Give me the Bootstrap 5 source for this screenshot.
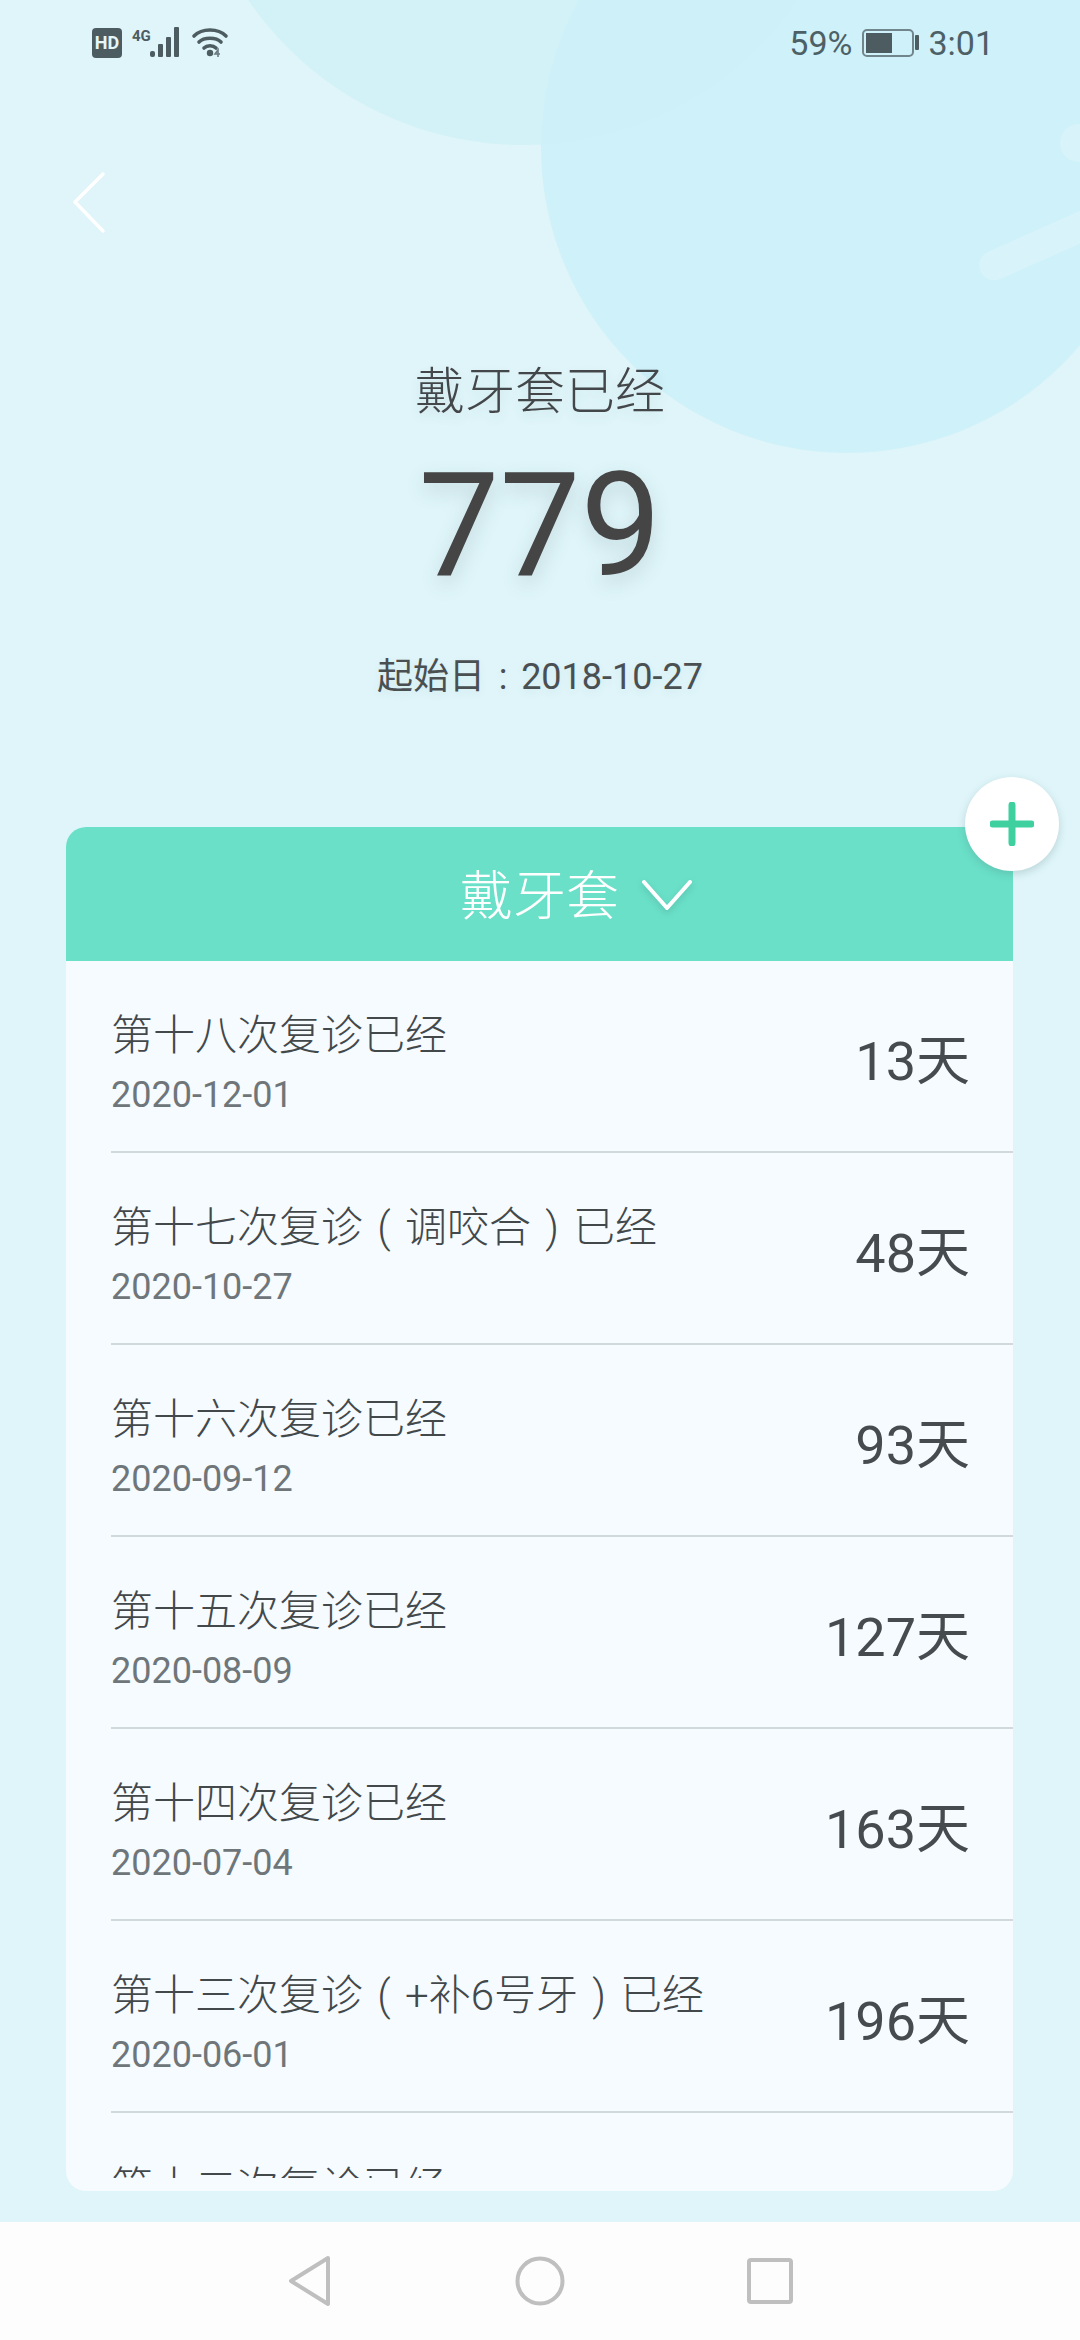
<!DOCTYPE html>
<html lang="zh-CN">
<head>
    <meta charset="UTF-8">
    <meta name="viewport" content="width=device-width, initial-scale=1.0">
    <title>戴牙套</title>
    <link href="https://cdn.jsdelivr.net/npm/bootstrap@5.3.3/dist/css/bootstrap.min.css" rel="stylesheet">
    <style>
        html, body { margin: 0; background: #dff5f9; }
        body { font-family: Roboto, "Noto Sans CJK SC", sans-serif; color: #454a4c; }
        .phone { position: relative; width: 1080px; height: 2340px; overflow: hidden; background: #dff5f9; }

        /* background decoration */
        .blob { position: absolute; border-radius: 50%; background: #cbf0f6; opacity: .6; }
        .blob-a { left: 190px; top: -521px; width: 666px; height: 666px; }
        .blob-b { left: 541px; top: -159px; width: 612px; height: 612px; background: #cdf1f8; opacity: .9; }
        .pill { position: absolute; background: #fff; opacity: .2; border-radius: 20px; }
        .pill-a { left: 975px; top: 230px; width: 130px; height: 30px; transform: rotate(-24deg); }
        .pill-b { left: 1060px; top: 124px; width: 50px; height: 38px; }

        .page-body { position: relative; height: 2222px; }

        /* status bar */
        .status-bar { height: 84px; padding: 27px 86px 0 92px; font-size: 34px; line-height: 32px; color: #4d6066; }
        .status-bar svg { display: block; }

        .back-row { height: 166px; padding: 0 0 0 72px; }
        .back-row svg { margin-top: 87px; }

        /* hero */
        .hero-title { margin-top: 112px; font-size: 50px; line-height: 60px; color: #43474a; font-weight: 300; text-shadow: 0 5px 12px rgba(60, 90, 100, .12); }
        .hero-count { margin-top: 29px; font-size: 144px; line-height: 150px; color: #454545; text-shadow: 0 8px 20px rgba(60, 90, 100, .18); }
        .hero-date { margin-top: 54px; font-size: 36px; line-height: 44px; color: #4a4f52; text-shadow: 0 3px 8px rgba(60, 90, 100, .08); }

        /* card */
        .day-card { position: absolute; left: 66px; top: 827px; width: 947px; height: 1364px; border: 0; border-radius: 20px; background: #f5fbfe; overflow: hidden; }
        .day-head { height: 134px; background: #6ae0c8; color: #fff; font-size: 53px; font-weight: 300; border: 0; border-radius: 0; padding: 2px 0 0 74px; }
        .day-head span { margin-top: 6px; }
        .day-head svg { margin-left: 22px; filter: drop-shadow(0 3px 3px rgba(60, 120, 110, .3)); }
        .day-list { height: 1217px; overflow: hidden; }
        .day-item { height: 192px; margin-left: 45px; padding: 0 43px 0 0; background: transparent; border: 0; border-bottom: 2px solid #d2d9dd; border-radius: 0; }
        .item-name { font-size: 42px; line-height: 50px; color: #43484b; font-weight: 300; margin-top: 14px; }
        .item-date { font-size: 36px; line-height: 40px; min-height: 40px; color: #6f767a; margin-top: 14px; }
        .item-days { font-size: 54px; line-height: 60px; color: #454b4f; margin-top: 12px; }
        .paren { display: inline-block; width: 1em; text-align: center; }

        .add-btn { position: absolute; left: 965px; top: 777px; width: 94px; height: 94px; border-radius: 50%; background: #fff; box-shadow: 0 3px 8px rgba(60, 100, 100, .22); padding: 0; border: 0; }

        /* system nav */
        .sys-nav { height: 118px; background: #fdfdfd; position: relative; }
        .sys-nav svg { display: block; }
        .nav-icons { gap: 182px; }
    </style>
</head>
<body>
<div class="phone">
    <div class="page-body">
        <div class="blob blob-a"></div>
        <div class="blob blob-b"></div>
        <div class="pill pill-a"></div>
        <div class="pill pill-b"></div>

        <!-- status bar -->
        <div class="status-bar d-flex justify-content-between position-relative">
            <svg width="140" height="32" viewBox="0 0 140 32">
                <rect x="0" y="1" width="30" height="30" rx="4" fill="#4d5c60"/>
                <text x="15" y="22" text-anchor="middle" font-family="Roboto" font-weight="700" font-size="18" fill="#e6f6f9">HD</text>
                <text x="40" y="14" font-family="Roboto" font-weight="700" font-size="15" fill="#4d5c60">4G</text>
                <g fill="#4d5c60">
                    <rect x="58" y="24" width="5" height="6" rx="2"/>
                    <rect x="66" y="17" width="5" height="13" rx="1"/>
                    <rect x="74" y="10" width="5" height="20" rx="1"/>
                    <rect x="82" y="0" width="5" height="30" rx="1"/>
                </g>
                <g fill="none" stroke="#4d5c60" stroke-width="3.6" stroke-linecap="round">
                    <path d="M102 9 C110 1 126 1 134 9"/>
                    <path d="M107 15 C112 10 124 10 129 15"/>
                    <path d="M112 21 C115 18 121 18 124 21"/>
                </g>
                <circle cx="118" cy="26" r="3.2" fill="#4d5c60"/>
                <path d="M126 30 v-7 l-3 4 h5" fill="none" stroke="#6b7b80" stroke-width="1.6"/>
            </svg>
            <div class="d-flex align-items-start">
                <span>59%</span>
                <svg class="ms-2 me-2" width="60" height="30" viewBox="0 0 60 30">
                    <rect x="3" y="3" width="50" height="26" rx="4" fill="none" stroke="#71868c" stroke-width="2"/>
                    <rect x="6" y="6" width="26" height="20" fill="#4d5c60"/>
                    <rect x="55" y="8" width="4" height="15" rx="1" fill="#4d5c60"/>
                </svg>
                <span>3:01</span>
            </div>
        </div>

        <!-- back -->
        <div class="back-row position-relative">
            <svg width="36" height="64" viewBox="0 0 36 64">
                <path d="M31 3 L3 31 L31 60" fill="none" stroke="#fff" stroke-width="3.5" stroke-linecap="round" stroke-linejoin="round"/>
            </svg>
        </div>

        <!-- hero -->
        <div class="text-center position-relative">
            <div class="hero-title">戴牙套已经</div>
            <div class="hero-count">779</div>
            <div class="hero-date">起始日<span class="paren">:</span>2018-10-27</div>
        </div>

        <!-- list card -->
        <div class="card day-card">
            <div class="card-header day-head d-flex align-items-center justify-content-center">
                <span>戴牙套</span>
                <svg width="52" height="32" viewBox="0 0 52 32"><path d="M3 3 L26 29 L49 3" fill="none" stroke="#fff" stroke-width="4" stroke-linecap="round" stroke-linejoin="round"/></svg>
            </div>
            <div class="list-group day-list">
                <div class="list-group-item day-item flex-shrink-0 d-flex justify-content-between align-items-center">
                    <div><div class="item-name">第十八次复诊已经</div><div class="item-date">2020-12-01</div></div>
                    <div class="item-days">13天</div>
                </div>
                <div class="list-group-item day-item flex-shrink-0 d-flex justify-content-between align-items-center">
                    <div><div class="item-name">第十七次复诊<span class="paren">(</span>调咬合<span class="paren">)</span>已经</div><div class="item-date">2020-10-27</div></div>
                    <div class="item-days">48天</div>
                </div>
                <div class="list-group-item day-item flex-shrink-0 d-flex justify-content-between align-items-center">
                    <div><div class="item-name">第十六次复诊已经</div><div class="item-date">2020-09-12</div></div>
                    <div class="item-days">93天</div>
                </div>
                <div class="list-group-item day-item flex-shrink-0 d-flex justify-content-between align-items-center">
                    <div><div class="item-name">第十五次复诊已经</div><div class="item-date">2020-08-09</div></div>
                    <div class="item-days">127天</div>
                </div>
                <div class="list-group-item day-item flex-shrink-0 d-flex justify-content-between align-items-center">
                    <div><div class="item-name">第十四次复诊已经</div><div class="item-date">2020-07-04</div></div>
                    <div class="item-days">163天</div>
                </div>
                <div class="list-group-item day-item flex-shrink-0 d-flex justify-content-between align-items-center">
                    <div><div class="item-name">第十三次复诊<span class="paren">(</span>+补6号牙<span class="paren">)</span>已经</div><div class="item-date">2020-06-01</div></div>
                    <div class="item-days">196天</div>
                </div>
                <!-- cut off by the scroll area in the screenshot, only the top of the name shows -->
                <div class="list-group-item day-item flex-shrink-0 d-flex justify-content-between align-items-center">
                    <div><div class="item-name">第十二次复诊已经</div><div class="item-date"></div></div>
                </div>
            </div>
        </div>

        <button class="btn add-btn d-flex align-items-center justify-content-center" type="button" aria-label="添加">
            <svg width="44" height="44" viewBox="0 0 44 44"><path d="M22 3 V41 M3 22 H41" fill="none" stroke="#3fd0a0" stroke-width="7" stroke-linecap="round"/></svg>
        </button>
    </div>

    <!-- system navigation -->
    <div class="sys-nav d-flex justify-content-center align-items-center">
        <div class="nav-icons d-flex align-items-center">
            <svg width="46" height="52" viewBox="0 0 46 52"><path d="M41 3 L4 26 L41 49 Z" fill="none" stroke="#bfbfbf" stroke-width="4" stroke-linejoin="round"/></svg>
            <svg width="50" height="50" viewBox="0 0 50 50"><circle cx="25" cy="25" r="22.5" fill="none" stroke="#bfbfbf" stroke-width="4"/></svg>
            <svg width="46" height="46" viewBox="0 0 46 46"><rect x="2" y="2" width="42" height="42" rx="2" fill="none" stroke="#bfbfbf" stroke-width="4"/></svg>
        </div>
    </div>
</div>
<script src="https://cdn.jsdelivr.net/npm/bootstrap@5.3.3/dist/js/bootstrap.bundle.min.js"></script>
</body>
</html>
